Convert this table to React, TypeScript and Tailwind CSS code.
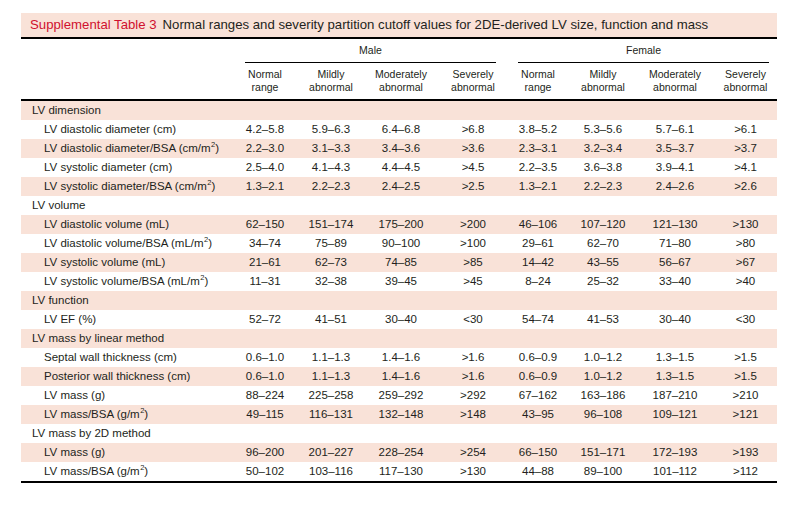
import React from "react";

type Row = { label: React.ReactNode; section?: boolean; v?: string[] };

const M2 = <sup className="text-[7.5px] -top-[5px] ml-[0.5px]">2</sup>;

const rows: Row[] = [
  { label: "LV dimension", section: true },
  { label: "LV diastolic diameter (cm)", v: ["4.2–5.8", "5.9–6.3", "6.4–6.8", ">6.8", "3.8–5.2", "5.3–5.6", "5.7–6.1", ">6.1"] },
  { label: <>LV diastolic diameter/BSA (cm/m{M2})</>, v: ["2.2–3.0", "3.1–3.3", "3.4–3.6", ">3.6", "2.3–3.1", "3.2–3.4", "3.5–3.7", ">3.7"] },
  { label: "LV systolic diameter (cm)", v: ["2.5–4.0", "4.1–4.3", "4.4–4.5", ">4.5", "2.2–3.5", "3.6–3.8", "3.9–4.1", ">4.1"] },
  { label: <>LV systolic diameter/BSA (cm/m{M2})</>, v: ["1.3–2.1", "2.2–2.3", "2.4–2.5", ">2.5", "1.3–2.1", "2.2–2.3", "2.4–2.6", ">2.6"] },
  { label: "LV volume", section: true },
  { label: "LV diastolic volume (mL)", v: ["62–150", "151–174", "175–200", ">200", "46–106", "107–120", "121–130", ">130"] },
  { label: <>LV diastolic volume/BSA (mL/m{M2})</>, v: ["34–74", "75–89", "90–100", ">100", "29–61", "62–70", "71–80", ">80"] },
  { label: "LV systolic volume (mL)", v: ["21–61", "62–73", "74–85", ">85", "14–42", "43–55", "56–67", ">67"] },
  { label: <>LV systolic volume/BSA (mL/m{M2})</>, v: ["11–31", "32–38", "39–45", ">45", "8–24", "25–32", "33–40", ">40"] },
  { label: "LV function", section: true },
  { label: "LV EF (%)", v: ["52–72", "41–51", "30–40", "<30", "54–74", "41–53", "30–40", "<30"] },
  { label: "LV mass by linear method", section: true },
  { label: "Septal wall thickness (cm)", v: ["0.6–1.0", "1.1–1.3", "1.4–1.6", ">1.6", "0.6–0.9", "1.0–1.2", "1.3–1.5", ">1.5"] },
  { label: "Posterior wall thickness (cm)", v: ["0.6–1.0", "1.1–1.3", "1.4–1.6", ">1.6", "0.6–0.9", "1.0–1.2", "1.3–1.5", ">1.5"] },
  { label: "LV mass (g)", v: ["88–224", "225–258", "259–292", ">292", "67–162", "163–186", "187–210", ">210"] },
  { label: <>LV mass/BSA (g/m{M2})</>, v: ["49–115", "116–131", "132–148", ">148", "43–95", "96–108", "109–121", ">121"] },
  { label: "LV mass by 2D method", section: true },
  { label: "LV mass (g)", v: ["96–200", "201–227", "228–254", ">254", "66–150", "151–171", "172–193", ">193"] },
  { label: <>LV mass/BSA (g/m{M2})</>, v: ["50–102", "103–116", "117–130", ">130", "44–88", "89–100", "101–112", ">112"] },
];

const cols = "grid grid-cols-[209px_70px_62px_78px_66px_64px_66px_78px_63px]";
const heads = [
  ["Normal", "range"],
  ["Mildly", "abnormal"],
  ["Moderately", "abnormal"],
  ["Severely", "abnormal"],
];

export default function App() {
  return (
    <div
      className="w-[792px] h-[508px] bg-white pt-[13px] pl-[21px] text-[#231f20]"
      style={{ fontFamily: '"Liberation Sans", Arial, sans-serif' }}
    >
      <div className="w-[756px]">
        {/* title */}
        <div className="h-[24px] bg-[#f9e2d8] flex items-center pl-[9px] text-[13.2px] whitespace-nowrap">
          <span className="text-[#d0102e]">Supplemental Table 3</span>
          <span className="ml-[6px]">Normal ranges and severity partition cutoff values for 2DE-derived LV size, function and mass</span>
        </div>
        <div className="h-[2px] bg-black" />

        {/* header */}
        <div className={`${cols} text-[10.5px]`}>
          <div className="h-[24px]" />
          <div className="col-span-4 flex flex-col justify-end h-[24px]">
            <div className="text-center leading-none pb-[6px] pl-[5px]">Male</div>
            <div className="h-[1.5px] bg-black ml-[15px] mr-[10px]" />
          </div>
          <div className="col-span-4 flex flex-col justify-end h-[24px]">
            <div className="text-center leading-none pb-[6px] pl-[4px]">Female</div>
            <div className="h-[1.5px] bg-black ml-[12px] mr-[8px]" />
          </div>
          <div className="h-[36px]" />
          {[...heads, ...heads].map((h, i) => (
            <div key={i} className="h-[36px] flex flex-col items-center justify-center leading-[13.3px]">
              <span>{h[0]}</span>
              <span>{h[1]}</span>
            </div>
          ))}
        </div>
        <div className="h-[2px] bg-black" />

        {/* body */}
        {rows.map((r, i) => (
          <div
            key={i}
            className={`${cols} h-[19px] items-center text-[11.5px] whitespace-nowrap ${i % 2 === 0 ? "bg-[#f9e2d8]" : "bg-white"}`}
          >
            <div className={r.section ? "pl-[11px]" : "pl-[23px]"}>{r.label}</div>
            {r.v?.map((v, j) => (
              <div key={j} className="text-center">
                {v}
              </div>
            ))}
          </div>
        ))}
        <div className="h-[1.5px] bg-black" />
      </div>
    </div>
  );
}
